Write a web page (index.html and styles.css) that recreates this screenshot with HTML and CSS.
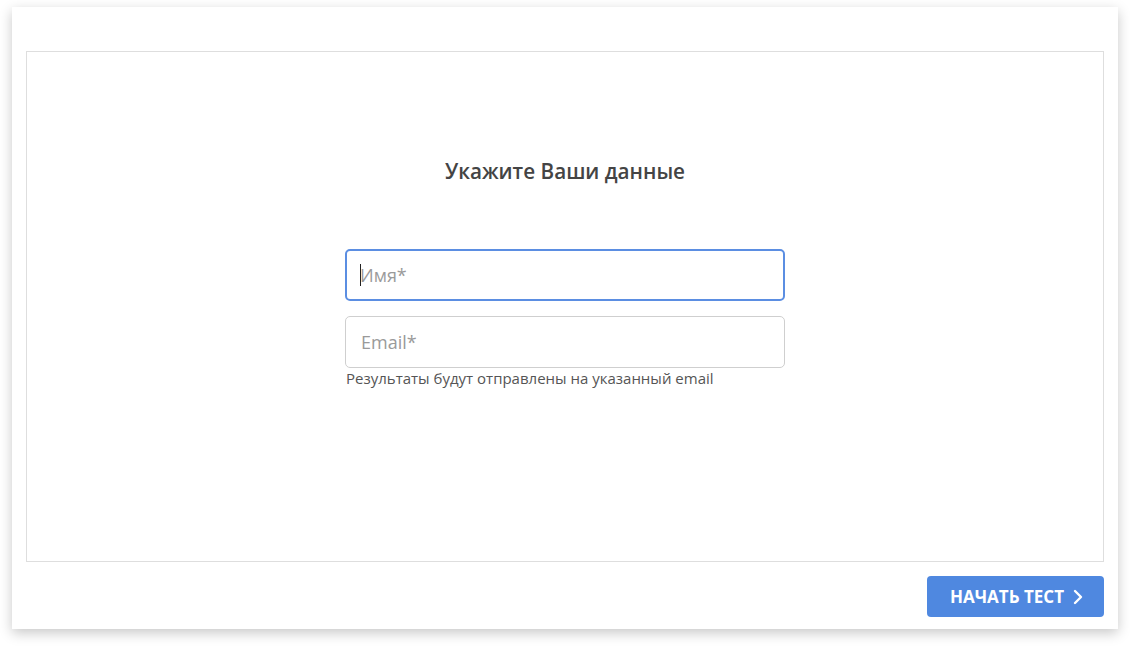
FILE: index.html
```html
<!DOCTYPE html>
<html lang="ru">
<head>
<meta charset="utf-8">
<link rel="stylesheet" href="styles.css">
</head>
<body>
<div class="page">
  <div class="card">
    <div class="panel">
      <h1 class="title">Укажите Ваши данные</h1>
      <form class="form">
        <div class="field field--focus"><span class="caret"></span><span class="ph">Имя*</span></div>
        <div class="field"><span class="ph">Email*</span></div>
        <div class="hint">Результаты будут отправлены на указанный email</div>
      </form>
    </div>
    <div class="footer">
      <button class="btn" type="button">НАЧАТЬ ТЕСТ
        <svg class="chev" width="10" height="16" viewBox="0 0 10 16"><path d="M2 2 L8 8 L2 14" fill="none" stroke="#fff" stroke-width="2.4" stroke-linecap="round" stroke-linejoin="round"/></svg>
      </button>
    </div>
  </div>
</div>
</body>
</html>
```
FILE: styles.css
```css
* { box-sizing: border-box; }
html, body { margin: 0; padding: 0; background: #fff; }
body { font-family: "Open Sans", "Liberation Sans", sans-serif; }
.page { padding: 7px 12px 18px 12px; }
.card {
  width: 1106px;
  height: 622px;
  background: #fff;
  box-shadow: 0 4px 12px rgba(0,0,0,0.22);
  padding: 44px 14px 12px 14px;
  display: flex;
  flex-direction: column;
}
.panel {
  height: 511px;
  border: 1px solid #dedede;
  display: flex;
  flex-direction: column;
  align-items: center;
  padding-top: 105px;
}
.title {
  margin: 0;
  font-size: 20.7px;
  line-height: 28px;
  font-weight: 600;
  color: #444;
}
.form {
  margin-top: 64px;
  width: 440px;
  display: flex;
  flex-direction: column;
}
.field {
  height: 52px;
  border: 1px solid #cfcfcf;
  border-radius: 5px;
  display: flex;
  align-items: center;
  padding-left: 15px;
  margin-bottom: 15px;
}
.field--focus {
  border: 2px solid #5b8ee2;
  padding-left: 13px;
}
.caret {
  display: inline-block;
  width: 1px;
  height: 22px;
  background: #222;
  margin-right: -1px;
}
.ph {
  font-size: 18px;
  color: #9a9a9a;
}
.field + .field { margin-bottom: 0; }
.hint {
  font-size: 15px;
  line-height: 20px;
  color: #555;
  padding-left: 1px;
}
.footer {
  margin-top: 14px;
  display: flex;
  justify-content: flex-end;
}
.btn {
  width: 177px;
  height: 41px;
  border: none;
  border-radius: 4px;
  background: #4f88e0;
  color: #fff;
  font-family: "Open Sans", "Liberation Sans", sans-serif;
  font-weight: 700;
  font-size: 17px;
  display: flex;
  align-items: center;
  justify-content: center;
  gap: 9px;
  padding: 0 0 0 2px;
}
.chev { display: block; }
```
